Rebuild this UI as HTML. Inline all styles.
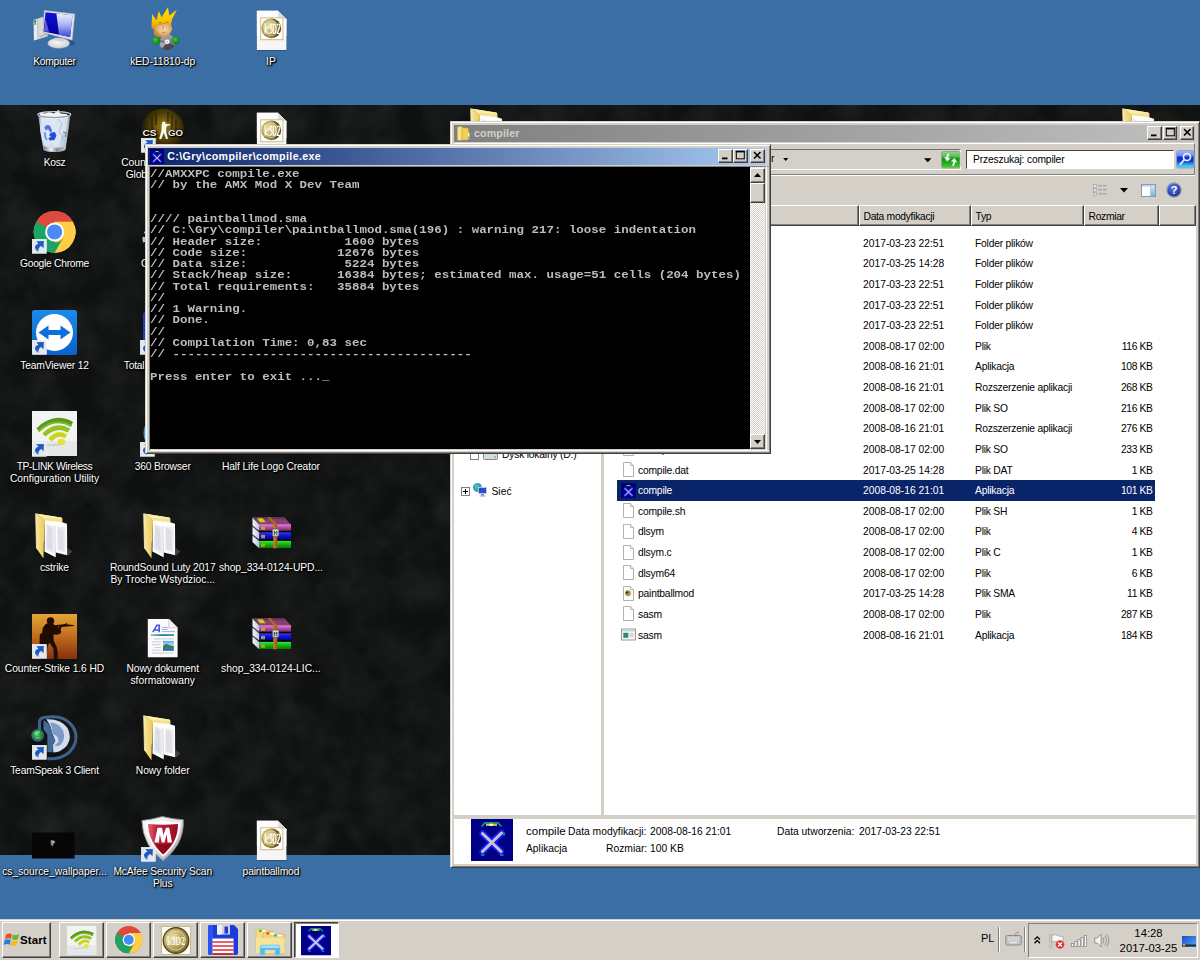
<!DOCTYPE html>
<html><head><meta charset="utf-8">
<style>
*{margin:0;padding:0;box-sizing:border-box}
html,body{width:1200px;height:960px;overflow:hidden}
body{background:#3a6ea5;font-family:"Liberation Sans",sans-serif;font-size:10.3px;color:#000;position:relative}
.a{position:absolute}
svg{display:block;overflow:visible}
#wall{position:absolute;left:0;top:105px;width:1200px;height:750px;background:#0f1110}
/* desktop icons */
.di{position:absolute;width:130px;text-align:center;color:#fff;font-size:10.3px;line-height:12.2px;text-shadow:1px 1px 1px #000,1px 1px 2px #000,0 0 2px #000;white-space:nowrap}
.di span{position:absolute;left:0;width:130px;top:49.500px}.di b{font-weight:normal}
/* classic 3d */
.win{position:absolute;background:#d4d0c8;border:1px solid;border-color:#d4d0c8 #404040 #404040 #d4d0c8;box-shadow:inset 1px 1px 0 #fff,inset -1px -1px 0 #808080}
.btn{position:absolute;background:#d4d0c8;border:1px solid;border-color:#fff #404040 #404040 #fff;box-shadow:inset -1px -1px 0 #808080}
.sunk{position:absolute;border:1px solid;border-color:#808080 #fff #fff #808080;box-shadow:inset 1px 1px 0 #404040}
.cb{position:absolute;top:1.5px;width:14.5px;height:13.5px;background:#d4d0c8;border:1px solid;border-color:#fff #404040 #404040 #fff;box-shadow:inset -1px -1px 0 #808080}
.cb svg{position:absolute;left:0;top:0;width:12.5px;height:11px}
/* explorer */
#ex{left:450px;top:121px;width:750px;height:747px}
#extb{position:absolute;left:4px;top:4px;width:741px;height:17px;background:linear-gradient(90deg,#808080,#c0c0c0);color:#d4d0c8;font-weight:bold;font-size:10.6px;line-height:17px;padding-left:20px;letter-spacing:.17px}
.hd{position:absolute;top:0;height:21px;background:#d4d0c8;border:1px solid;border-color:#fff #404040 #404040 #fff;box-shadow:inset -1px -1px 0 #808080;padding-left:3.5px;line-height:21px;font-size:10.3px;letter-spacing:-.3px}
.row{position:absolute;left:167px;width:538px;height:20.6px;line-height:22.6px;font-size:10.3px;white-space:nowrap}
.row i{position:absolute;font-style:normal;top:0}
.row .n{left:21px;letter-spacing:-.2px}.row .d{left:246px}.row .t{left:358px;letter-spacing:-.22px}.row .s{right:2.600px;text-align:right;letter-spacing:-.4px}
.row svg{position:absolute;left:4px;top:2.5px;width:15px;height:15px}
.sel{background:#0a246a;color:#fff}
/* console */
#cw{left:145px;top:144px;width:625.500px;height:310px}
#cwtb{position:absolute;left:2px;top:3px;width:618px;height:17px;letter-spacing:.4px;background:linear-gradient(90deg,#0a246a,#a6caf0);color:#fff;font-weight:bold;font-size:10.6px;line-height:17px;padding-left:19.300px}
#con{position:absolute;left:4px;top:22px;width:600px;height:282px;background:#000;overflow:hidden}
#con pre{font-family:"Liberation Mono",monospace;font-size:10px;line-height:11.25px;color:#bcbcbc;transform:scaleX(1.2465);transform-origin:0 0;position:absolute;left:0;top:2px;font-weight:bold}
/* taskbar */
#tb{position:absolute;left:0;top:919px;width:1200px;height:41px;background:#d4d0c8;border-top:1px solid #d4d0c8;box-shadow:inset 0 1px 0 #fff}
.tbb{position:absolute;top:4px;height:35px;width:43px}
</style></head><body>
<div id="wall"><svg width="1200" height="750" style="position:absolute;left:0;top:0;overflow:hidden"><filter id="nz" x="0" y="0" width="100%" height="100%"><feTurbulence type="fractalNoise" baseFrequency=".03" numOctaves="4" seed="7"/><feColorMatrix type="matrix" values="0 0 0 0 .85  0 0 0 0 .9  0 0 0 0 .85  .07 .07 .07 0 -.082"/></filter><rect width="1200" height="750" filter="url(#nz)"/></svg></div>
<svg width="0" height="0" style="position:absolute"><defs>
<linearGradient id="gFold" x1="0" y1="0" x2="1" y2="0"><stop offset="0" stop-color="#f7e9a0"/><stop offset="1" stop-color="#e9c95a"/></linearGradient>
<linearGradient id="gPaper" x1="0" y1="0" x2="1" y2="1"><stop offset="0" stop-color="#ffffff"/><stop offset="1" stop-color="#d8d8dc"/></linearGradient>
<radialGradient id="gMedal" cx=".38" cy=".4" r=".7"><stop offset="0" stop-color="#f0e8c0"/><stop offset=".5" stop-color="#bca85c"/><stop offset="1" stop-color="#6e5e24"/></radialGradient>
<linearGradient id="gCS" x1="0" y1="0" x2="0" y2="1"><stop offset="0" stop-color="#e4a634"/><stop offset=".5" stop-color="#c06c20"/><stop offset="1" stop-color="#86300e"/></linearGradient>
<linearGradient id="gTV" x1="0" y1="0" x2="0" y2="1"><stop offset="0" stop-color="#1a8ae8"/><stop offset="1" stop-color="#0a62d0"/></linearGradient>
<linearGradient id="gBin" x1="0" y1="0" x2="1" y2="0"><stop offset="0" stop-color="#dfe6ee"/><stop offset=".5" stop-color="#b8c8dc"/><stop offset="1" stop-color="#e8eef4"/></linearGradient>
<linearGradient id="gScr" x1="0" y1="0" x2="1" y2="0"><stop offset="0" stop-color="#1010d0"/><stop offset=".42" stop-color="#0808c8"/><stop offset=".5" stop-color="#b8c4ff"/><stop offset="1" stop-color="#e8ecff"/></linearGradient>
<linearGradient id="gSh" x1="0" y1="0" x2="0" y2="1"><stop offset="0" stop-color="#d04050"/><stop offset="1" stop-color="#7a1020"/></linearGradient>
<linearGradient id="gMet" x1="0" y1="0" x2="1" y2="1"><stop offset="0" stop-color="#ffffff"/><stop offset="1" stop-color="#9a9aa0"/></linearGradient>
<!-- shortcut overlay 14x14 -->
<symbol id="sc" viewBox="0 0 15 15"><rect x=".4" y=".4" width="14.200" height="14.200" fill="#e4e8ee" stroke="#f4f4f4" stroke-width=".8"/><path d="M4.300 2.400L12 2.100 11.700 9.500 9.300 7.100Q6.500 8.500 6.300 12.700 3.200 11.500 3 8.500 3.200 5.500 6.600 4.700z" fill="#1c5cc0"/><path d="M5 9.500q.3 2 1.300 3.200" stroke="#4a8ae0" stroke-width=".8" fill="none"/></symbol>
<!-- open folder with paper 45x45 -->
<symbol id="fold" viewBox="0 0 45 45"><path d="M3.700 .5L29 4.400q1.200.3 1.300 1.500L30.500 10 13 8z" fill="#f6e08a"/><path d="M3.700 .5L29 4.400q1.200.3 1.300 1.500L13 5z" fill="#fbeeb0"/><path d="M13 7.200L30 9.300 35 10.700 35.200 42.200 23.800 39.600 23.500 44.200 12.400 38.400z" fill="#fdfdfe"/><path d="M14.500 10.500L22 14.500 22.500 41 13.800 36.500z" fill="#e9e9f1"/><path d="M15.500 13l3 1.600 1.500 2.500.4 20.500-5.200-2.700z" fill="#dcdce6"/><path d="M22.900 12.700L23.500 44.200" stroke="#c8c8d0" stroke-width=".7"/><path d="M25 13.500L33.500 14 33.700 39.500 25.300 37.500z" fill="#ececf0"/><path d="M26 15.500l3.500.2 2 2.300.2 19.500-5.500-1.300z" fill="#dedee4"/><path d="M3.700 .5L13 7.500 12.400 27.900 11.800 29 11.500 45.400 4.500 35.500z" fill="url(#gFold)"/><path d="M3.700 .5L4.500 35.500" stroke="#fff4c0" stroke-width=".8"/><path d="M35.500 35l5 3.500-5 4.500z" fill="#777" opacity=".45"/></symbol>
<!-- k3d2 document 45x45 : paper 8.7..38.7 x 4.75..43.75 -->
<symbol id="kdoc" viewBox="0 0 45 45"><path d="M9.400 43.900h29.500v1H10z" fill="#123" opacity=".35"/><path d="M8.900 4.800h21l8.500 8.500V43.900H8.900z" fill="#f6f6f6"/><path d="M8.900 4.800h21l8.500 8.500V30H8.900z" fill="#fdfdfd"/><path d="M29.900 4.800v8.500h8.500z" fill="#dcdcdc"/><path d="M29.900 4.800v8.500h8.500" fill="none" stroke="#f8f8f8" stroke-width=".8"/><rect x="12.700" y="11.800" width="22.200" height="21.900" fill="#fefefe" stroke="#cdbb84" stroke-width="1"/><circle cx="23.200" cy="22.300" r="9.900" fill="url(#gMedal)"/><path d="M23.200 12.400a9.900 9.900 0 0 1 0 19.800q6-3 6.500-10t-6.500-9.800z" fill="#4a3c10" opacity=".7"/><circle cx="23.200" cy="22.300" r="7.300" fill="none" stroke="#f4ecc8" stroke-width=".7" opacity=".7"/><g fill="none" stroke="#fffdf2" stroke-width="1.150" stroke-linejoin="round"><path d="M17.200 17v10.500M20.300 20.800l-3 3.500 3.200 3.200"/><path d="M21.300 18h2.700l-1.700 3.500q2.100.3 1.800 3.200t-3 2.600"/><path d="M25.300 18v9.300h.6q2.100 0 2.100-4.650T25.900 18z"/><path d="M29 19.600q.3-1.700 1.600-1.600 1.500.2 1.200 2.300T29 27.300h3.300"/></g></symbol>
<!-- winrar 45x45 : 4.5..43 x 3.5..35.5 -->
<symbol id="rar" viewBox="0 0 45 45"><linearGradient id="rP" x1="0" y1="0" x2="0" y2="1"><stop offset="0" stop-color="#ff98f4"/><stop offset=".25" stop-color="#d060c0"/><stop offset="1" stop-color="#7a2c68"/></linearGradient><linearGradient id="rB" x1="0" y1="0" x2="0" y2="1"><stop offset="0" stop-color="#4040ff"/><stop offset=".3" stop-color="#1818e8"/><stop offset="1" stop-color="#000088"/></linearGradient><linearGradient id="rG" x1="0" y1="0" x2="0" y2="1"><stop offset="0" stop-color="#38f038"/><stop offset=".3" stop-color="#18c818"/><stop offset="1" stop-color="#0c700c"/></linearGradient><linearGradient id="rW" x1="0" y1="0" x2="1" y2="0"><stop offset="0" stop-color="#f4f4ff"/><stop offset="1" stop-color="#c4c4dc"/></linearGradient><path d="M11.200 11.300h31.800v24H11.200z" fill="#000"/><path d="M4.500 4.300H36.300L42.700 11.300H11.200z" fill="#84426e"/><path d="M4.500 4.300H36.300L38 6.200H6.200z" fill="#6a3058"/><rect x="11.200" y="11.300" width="31.800" height="6.400" fill="url(#rP)"/><rect x="11.200" y="19.400" width="31.800" height="7" fill="url(#rB)"/><rect x="11.200" y="27.900" width="31.800" height="7.300" fill="url(#rG)"/><path d="M4.500 4.600L11.200 11.300V17.700L4.500 12.500z" fill="url(#rW)"/><path d="M4.500 13.500L11.200 19.400V26.400L4.500 21.500z" fill="url(#rW)"/><path d="M4.500 22.500L11.200 27.900V35.200L4.500 29z" fill="url(#rW)"/><path d="M4.500 4.600L11.200 11.300M4.500 13L11.200 19M4.500 22L11.200 27.600" stroke="#555" stroke-width=".7"/><path d="M19.400 4.300h2.900L29.300 11.300h-3.800z" fill="#a86c14"/><rect x="25.500" y="11.300" width="3.800" height="23.900" fill="#a8601a"/><rect x="25.500" y="11.300" width="1.300" height="23.900" fill="#c88428"/><rect x="24.400" y="16" width="6.400" height="7.200" rx="1.300" fill="#d8d8d8" stroke="#555" stroke-width=".7"/><path d="M26.300 18v4M28.800 18v4M26.300 18.500l1.250 1.500 1.250-1.500" stroke="#333" stroke-width=".9" fill="none"/><path d="M9.200 5.200h5.500L17.700 9.200h-5.900z" fill="#d4cc10"/><rect x="13" y="13.600" width="4" height="3.200" fill="#c8a030"/><rect x="13" y="21.800" width="4" height="3.500" fill="#a09858"/><rect x="13" y="30.500" width="4" height="3.200" fill="#98b020"/></symbol>
<!-- chrome -->
<symbol id="chr" viewBox="0 0 48 48"><circle cx="24" cy="24" r="22" fill="#dd4b3e"/><path d="M24 24L4.900 13A22 22 0 0 0 24 46L33.500 29.500z" fill="#1da462" /><path d="M24 24L24 46A22 22 0 0 0 43.100 13H24z" fill="#ffcd46"/><path d="M4.900 13A22 22 0 0 1 43.100 13H24z" fill="#dd4b3e"/><path d="M4.900 13L14.500 29.500 24 24z" fill="#1da462"/><path d="M24 13h19.100A22 22 0 0 1 24 46l9.500-16.500z" fill="#ffcd46"/><path d="M4.900 13A22 22 0 0 1 43.100 13H24A11 11 0 0 0 14.470 18.500z" fill="#dd4b3e"/><path d="M4.900 13L14.470 29.500A11 11 0 0 0 33.530 29.500L24 46A22 22 0 0 1 4.900 13z" fill="#1da462"/><circle cx="24" cy="24" r="10" fill="#fff"/><circle cx="24" cy="24" r="8" fill="#4a8af4"/></symbol>
<!-- tp-link wifi -->
<symbol id="wifi" viewBox="0 0 45 45"><rect width="45" height="45" fill="#f2f4f4"/><rect y="30" width="45" height="15" fill="#e4e8e8"/><g fill="none" stroke-linecap="butt"><path d="M6 19Q22 3 40 13" stroke="#5a9a1a" stroke-width="4.500"/><path d="M6.500 20.500Q22 5.500 39.500 15" stroke="#7ab82a" stroke-width="2"/><path d="M12 24Q24 12 37 19.500" stroke="#98c020" stroke-width="4.500"/><path d="M18 29Q26 20 34 25.500" stroke="#c8d818" stroke-width="4.500"/></g><ellipse cx="29.500" cy="31" rx="4" ry="3.200" fill="#e8e040"/><path d="M10 36q8-3 18-2" stroke="#c8cccc" stroke-width="1.500" fill="none"/></symbol>
<!-- X compile icon -->
<symbol id="xi" viewBox="0 0 42 42"><rect width="42" height="42" fill="#000087"/><path d="M11.500 14.500L30 32.500M30.500 14L11.500 32.500" stroke="#1a1aff" stroke-width="6.500" stroke-linecap="round"/><path d="M13.500 36h-3.500M32.500 36h-3.500M33 13.500v3" stroke="#10a0a0" stroke-width="1.600"/><path d="M11.500 14.500L30 32.500M30.500 14L11.500 32.500" stroke="#c6c6cc" stroke-width="3" stroke-linecap="round"/><path d="M10.500 7.500L14 3.800h13l3.500 3.700" stroke="#109888" stroke-width="1.700" fill="none"/><path d="M15 5.800h11" stroke="#d8c810" stroke-width="2.200"/><path d="M18.500 5.800h3.500" stroke="#fff" stroke-width="2.200"/></symbol>
</defs></svg>
<!-- DESKTOP ICONS -->
<div class="di" style="left:424.3px;top:107.50px"><div class="a" style="left:42.500px;top:0;width:45px;height:45px"><svg viewBox="0 0 45 45" style="width:45px;height:45px"><use href="#fold" width="45" height="45"/></svg></div><span></span></div>
<div class="di" style="left:1076.2px;top:107.50px"><div class="a" style="left:42.500px;top:0;width:45px;height:45px"><svg viewBox="0 0 45 45" style="width:45px;height:45px"><use href="#fold" width="45" height="45"/></svg></div><span></span></div>
<div class="di" style="left:-10.5px;top:6.25px"><div class="a" style="left:42.500px;top:0;width:45px;height:45px"><svg viewBox="0 0 45 45" style="width:45px;height:45px"><defs><linearGradient id="kR" x1="0" y1="0" x2="0" y2="1"><stop offset="0" stop-color="#eef0ff"/><stop offset=".45" stop-color="#b0b8f8"/><stop offset="1" stop-color="#3848d8"/></linearGradient><linearGradient id="kL" x1="0" y1="0" x2="0" y2="1"><stop offset="0" stop-color="#1010d8"/><stop offset="1" stop-color="#000098"/></linearGradient><radialGradient id="kB" cx=".45" cy=".4" r=".6"><stop offset="0" stop-color="#f8f8f8"/><stop offset="1" stop-color="#cfcfd2"/></radialGradient></defs><ellipse cx="38" cy="37" rx="5" ry="2.500" fill="#1a3050" opacity=".4"/><path d="M5.400 12.700L11.200 10.800V26.400L16.500 29.900 5.700 33.600z" fill="#d6d6d8"/><path d="M1.600 13.900L5.400 12.700 5.700 33.600 1.900 34.600z" fill="#ececee"/><path d="M7 30l8-2.600 1.500 1-8.500 2.800z" fill="#b8b8bc"/><rect x="2.200" y="14.300" width="2" height="2.300" fill="#505458"/><rect x="2.200" y="16.800" width="2" height="2" fill="#38d828"/><ellipse cx="26.700" cy="37.200" rx="10.800" ry="5" fill="url(#kB)"/><ellipse cx="26.700" cy="37.200" rx="10.800" ry="5" fill="none" stroke="#c4c4c8" stroke-width=".5"/><path d="M23.500 31.500l8.800 1.800-.6 2.500-8.800-1.200z" fill="#d0d0d4"/><path d="M12.400 4.500L42.700 8 40.100 34 10.700 26.400z" fill="#e2e2e0"/><path d="M12.400 4.500L42.700 8 40.100 34 10.700 26.400z" fill="none" stroke="#c8c8c4" stroke-width=".5"/><path d="M13.600 6.300L40.400 9.200 38.100 31.100 11.500 25.500z" fill="url(#kL)"/><path d="M24.400 7.500L40.400 9.200 38.100 31.100 27 28.700z" fill="url(#kR)"/><path d="M13.600 13L17 25.800 11.500 25.500z" fill="#8080e0" opacity=".7"/></svg></div><span><b style="letter-spacing:-0.275px">Komputer</b></span></div>
<div class="di" style="left:97.7px;top:6.25px"><div class="a" style="left:42.500px;top:0;width:45px;height:45px"><svg viewBox="0 0 45 45" style="width:45px;height:45px"><defs><linearGradient id="kH" x1="0" y1="0" x2="0" y2="1"><stop offset="0" stop-color="#ffe000"/><stop offset=".6" stop-color="#fcc400"/><stop offset="1" stop-color="#e89000"/></linearGradient><radialGradient id="kF" cx=".55" cy=".45" r=".6"><stop offset="0" stop-color="#fcdcae"/><stop offset="1" stop-color="#c8904c"/></radialGradient><radialGradient id="kG" cx=".4" cy=".4" r=".6"><stop offset="0" stop-color="#40c840"/><stop offset="1" stop-color="#108010"/></radialGradient></defs><circle cx="27.300" cy="36.300" r="7.900" fill="#7c7c80"/><path d="M27.300 36.300L20 33.500A7.900 7.900 0 0 1 33 30.800z" fill="#9a9aa0"/><path d="M27.300 36.300L34.500 39.500A7.900 7.900 0 0 1 22 42.200z" fill="#4a4a4e"/><path d="M27.300 36.300L22 42.200A7.900 7.900 0 0 1 19.500 37z" fill="#a8a8ac"/><circle cx="27.300" cy="35.800" r="2.400" fill="#f8f8f8"/><circle cx="27.300" cy="35.800" r=".9" fill="#b0b0b0"/><path d="M13 19.400L30.800 17.100 32.200 23.500 29.300 28.700 26 31 17 31 14.200 28.700z" fill="url(#kF)"/><path d="M13 19.400l2 10 3 1.600h4l-5-5z" fill="#b87838" opacity=".5"/><path d="M11.500 21.700L12.100 8 16.500 14.200 18.800 5.100 21.700 11.200 27.900 1.300 29.300 9.500 36.900 3.700 32.200 13 30.800 18.800 24 17.500 17 19.500 13 23z" fill="url(#kH)"/><path d="M19 16.600h2.500M26 16.200h2.500" stroke="#a87808" stroke-width="1"/><path d="M23.500 20.500l-.8 3.500M22 26.200q1.500.8 3-.2" stroke="#a06830" stroke-width=".7" fill="none"/><circle cx="16.200" cy="34.600" r="4" fill="url(#kG)"/><circle cx="35.700" cy="34.300" r="3.600" fill="url(#kG)"/></svg></div><span><b style="letter-spacing:-0.050px">kED-11810-dp</b></span></div>
<div class="di" style="left:205.9px;top:6.25px"><div class="a" style="left:42.500px;top:0;width:45px;height:45px"><svg viewBox="0 0 45 45" style="width:45px;height:45px"><use href="#kdoc" width="45" height="45"/></svg></div><span>IP</span></div>
<div class="di" style="left:-10.5px;top:107.50px"><div class="a" style="left:42.500px;top:0;width:45px;height:45px"><svg viewBox="0 0 45 45" style="width:45px;height:45px"><defs><linearGradient id="bB" x1="0" y1="0" x2="1" y2="0"><stop offset="0" stop-color="#5a6a78"/><stop offset=".08" stop-color="#b8c8d8"/><stop offset=".3" stop-color="#d4e0ee"/><stop offset=".7" stop-color="#ccdaea"/><stop offset=".93" stop-color="#a8b8c8"/><stop offset="1" stop-color="#4a5a68"/></linearGradient><linearGradient id="bM" x1="0" y1="0" x2="1" y2="0"><stop offset="0" stop-color="#707880"/><stop offset=".35" stop-color="#f4f4f4"/><stop offset=".6" stop-color="#888e94"/><stop offset="1" stop-color="#c0c4c8"/></linearGradient></defs><path d="M6 7L38.600 7 33.700 40.600Q33.700 43.800 22.300 43.800T11.200 40.600z" fill="url(#bB)"/><path d="M11.500 38Q22 42 33.500 38L33.700 40.600Q33.700 43.800 22.300 43.800T11.200 40.600z" fill="url(#bM)"/><path d="M9 9l6 2 6-2.500 7 3 8-3-2 14-5 6 1 8-6 3-4-5-6 4-4-6-2-10z" fill="#e0eaf6" opacity=".75"/><path d="M26 11l4 5-3 8 4 4-3 9" stroke="#a8b8cc" stroke-width=".8" fill="none"/><path d="M31 24l3.500 1-1 4" stroke="#707c88" stroke-width="1" fill="none"/><path d="M8 4.500l5 1 4-1.500 5 1.500 4.400-3.700 2 3.700 6 .5 3 2.500-8 2.500h-14l-8-2.500z" fill="#eef4fa"/><ellipse cx="22.300" cy="6.600" rx="16.400" ry="3" fill="none" stroke="#c8ccd0" stroke-width="1.300"/><path d="M6 7.500Q22 11.500 38.500 7.500" stroke="#8a9098" stroke-width=".9" fill="none"/><g transform="translate(11.800 0) scale(.78 1) translate(-11.800 0)"><path d="M12.500 19.500q3-4 7.500-1.500l2.500 4.500-2.500 2.500-2-3.500q-2-1-3.500 1.500z" fill="#4a7ae0"/><path d="M18.500 27l3-2.500 4.500-.5 2 3.500-2.500 4.500-6 .5-2-2.500 3.500-1z" fill="#2450d8"/><path d="M11.800 24l2.500.5 1 5 1.500 2.500-2 .5q-3-3-3-8.500z" fill="#6a96e8"/></g></svg></div><span><b style="letter-spacing:-0.350px">Kosz</b></span></div>
<div class="di" style="left:97.7px;top:107.50px"><div class="a" style="left:42.500px;top:0;width:45px;height:45px"><svg viewBox="0 0 45 45" style="width:45px;height:45px"><defs><radialGradient id="gGo" cx=".54" cy=".42" r=".56"><stop offset="0" stop-color="#a08418"/><stop offset=".45" stop-color="#5e4c0a"/><stop offset=".85" stop-color="#2a2206"/><stop offset="1" stop-color="#17150c"/></radialGradient></defs><circle cx="22.500" cy="22" r="21.500" fill="url(#gGo)"/><path d="M12 8v14M16 5v12M28 4v10M32 7v14M36 12v10" stroke="#2a2004" stroke-width="1.500" opacity=".8"/><path d="M22.500 14q1.400-1.300 2.700.2l.3 1.800 4.800.3v1l-3.300.5-1 2.300.3 4.400 1.700 6.200-2 .3-2.200-6.300-2.600 6.500-2-.5 2.300-8.200.2-5.500z" fill="#fbfbf6"/><text x="2.500" y="27.500" font-family="Liberation Sans" font-weight="bold" font-size="9.500" fill="#f0f0f0" textLength="14" lengthAdjust="spacingAndGlyphs">CS</text><text x="28" y="27.500" font-family="Liberation Sans" font-weight="bold" font-size="9.500" fill="#e8e8e8" textLength="15" lengthAdjust="spacingAndGlyphs">GO</text></svg><svg class="a" style="left:1px;top:30.500px;width:14.800px;height:14.800px"><use href="#sc"/></svg></div><span><b style="position:relative;left:-8.300px">Counter-Strike</b><br><b style="letter-spacing:-0.119px">Global Offensive</b></span></div>
<div class="di" style="left:205.9px;top:107.50px"><div class="a" style="left:42.500px;top:0;width:45px;height:45px"><svg viewBox="0 0 45 45" style="width:45px;height:45px"><use href="#kdoc" width="45" height="45"/></svg></div><span>sma</span></div>
<div class="di" style="left:-10.5px;top:208.75px"><div class="a" style="left:42.500px;top:0;width:45px;height:45px"><svg viewBox="0 0 45 45" style="width:45px;height:45px"><use href="#chr" x="-.1" y=".25" width="45.400" height="45.400"/></svg><svg class="a" style="left:0;top:30.300px;width:14.800px;height:14.800px"><use href="#sc"/></svg></div><span><b style="letter-spacing:-0.285px">Google Chrome</b></span></div>
<div class="di" style="left:97.7px;top:208.75px"><div class="a" style="left:42.500px;top:0;width:45px;height:45px"><svg viewBox="0 0 45 45" style="width:45px;height:45px"><circle cx="16" cy="30" r="10.500" fill="none" stroke="#a8c4e8" stroke-width="6" stroke-dasharray="4.500 3"/><circle cx="16" cy="30" r="9" fill="#c4d8f0"/></svg></div><span>CCleaner</span></div>
<div class="di" style="left:-10.5px;top:310.00px"><div class="a" style="left:42.500px;top:0;width:45px;height:45px"><svg viewBox="0 0 45 45" style="width:45px;height:45px"><rect width="45" height="45" rx="2.500" fill="url(#gTV)"/><circle cx="22.500" cy="22.500" r="18.500" fill="#fff"/><path d="M6.500 22.500l10-7v4.500h12v-4.500l10 7-10 7v-4.500h-12v4.500z" fill="#0e6edc"/></svg><svg class="a" style="left:0;top:30.300px;width:14.800px;height:14.800px"><use href="#sc"/></svg></div><span><b style="letter-spacing:-0.162px">TeamViewer 12</b></span></div>
<div class="di" style="left:97.7px;top:310.00px"><div class="a" style="left:42.500px;top:0;width:45px;height:45px"><svg viewBox="0 0 45 45" style="width:45px;height:45px"><rect x="3" y="2" width="40" height="41" rx="3" fill="#1a3ad0"/><rect x="8" y="22" width="30" height="21" fill="#fff"/><rect x="14" y="2" width="18" height="12" fill="#d8d8e0"/></svg><svg class="a" style="left:0;top:30.300px;width:14.800px;height:14.800px"><use href="#sc"/></svg></div><span><b style="letter-spacing:-0.220px">Total Commander</b></span></div>
<div class="di" style="left:-10.5px;top:411.25px"><div class="a" style="left:42.500px;top:0;width:45px;height:45px"><svg viewBox="0 0 45 45" style="width:45px;height:45px"><use href="#wifi" width="45" height="45"/></svg><svg class="a" style="left:0;top:30.300px;width:14.800px;height:14.800px"><use href="#sc"/></svg></div><span><b style="letter-spacing:-0.388px">TP-LINK Wireless</b><br><b style="letter-spacing:-0.005px">Configuration Utility</b></span></div>
<div class="di" style="left:97.7px;top:411.25px"><div class="a" style="left:42.500px;top:0;width:45px;height:45px"><svg viewBox="0 0 45 45" style="width:45px;height:45px"><circle cx="22.500" cy="22" r="19" fill="#28a0e8"/><path d="M5 25q8 10 17 4l6 8q-14 8-23-6z" fill="#58c828"/><circle cx="22.500" cy="21" r="9" fill="#fff"/></svg><svg class="a" style="left:0;top:30.300px;width:14.800px;height:14.800px"><use href="#sc"/></svg></div><span><b style="letter-spacing:-0.164px">360 Browser</b></span></div>
<div class="di" style="left:205.9px;top:411.25px"><div class="a" style="left:42.500px;top:0;width:45px;height:45px"><svg viewBox="0 0 45 45" style="width:45px;height:45px"><circle cx="22.500" cy="22.500" r="20" fill="#2a2a2a"/><circle cx="22.500" cy="22.500" r="16" fill="none" stroke="#f0a020" stroke-width="4"/><path d="M17 12h5l8 21h-5l-4-11-4 11h-4l5-14z" fill="#f0a020"/></svg></div><span><b style="letter-spacing:-0.127px">Half Life Logo Creator</b></span></div>
<div class="di" style="left:-10.5px;top:512.50px"><div class="a" style="left:42.500px;top:0;width:45px;height:45px"><svg viewBox="0 0 45 45" style="width:45px;height:45px"><use href="#fold" width="45" height="45"/></svg></div><span><b style="letter-spacing:-0.114px">cstrike</b></span></div>
<div class="di" style="left:97.7px;top:512.50px"><div class="a" style="left:42.500px;top:0;width:45px;height:45px"><svg viewBox="0 0 45 45" style="width:45px;height:45px"><use href="#fold" width="45" height="45"/></svg></div><span><b style="letter-spacing:-0.130px">RoundSound Luty 2017</b><br><b style="letter-spacing:-0.005px">By Troche Wstydzioc...</b></span></div>
<div class="di" style="left:205.9px;top:512.50px"><div class="a" style="left:42.500px;top:0;width:45px;height:45px"><svg viewBox="0 0 45 45" style="width:45px;height:45px"><use href="#rar" width="45" height="45"/></svg></div><span><b style="letter-spacing:-0.077px">shop_334-0124-UPD...</b></span></div>
<div class="di" style="left:-10.5px;top:613.75px"><div class="a" style="left:42.500px;top:0;width:45px;height:45px"><svg viewBox="0 0 45 45" style="width:45px;height:45px"><rect width="45" height="45" fill="url(#gCS)"/><g fill="#200c02"><circle cx="18.500" cy="7" r="3.700"/><path d="M15 9.500l6.500.5 1 1.200 9.500-.9 3-1.300.4 1.600 6.200.3v1.100l-6.500.4-5.500.6-1 2.800.6 1.800-.6 2-3.600 1.200-3.500-.4.200 6.300 2.800 5.700 1.300 6.600-.3 6h-3.600l-.5-10.500-4-6-1.600 3.500-2 13H7.500l2-14-2-.5.300-10.500 2.200-.8.800-5.200 2.200-3.200z"/></g><path d="M26.200 13.500l1-1.500" stroke="#c87820" stroke-width=".8"/></svg><svg class="a" style="left:0;top:30.300px;width:14.800px;height:14.800px"><use href="#sc"/></svg></div><span><b style="letter-spacing:-0.095px">Counter-Strike 1.6 HD</b></span></div>
<div class="di" style="left:97.7px;top:613.75px"><div class="a" style="left:42.500px;top:0;width:45px;height:45px"><svg viewBox="0 0 45 45" style="width:45px;height:45px"><defs><linearGradient id="rT" x1="0" y1="0" x2="1" y2="0"><stop offset="0" stop-color="#8cc8c0"/><stop offset=".5" stop-color="#188484"/><stop offset="1" stop-color="#3a9a94"/></linearGradient><linearGradient id="rS" x1="0" y1="0" x2="0" y2="1"><stop offset="0" stop-color="#58a8f0"/><stop offset=".45" stop-color="#b8dcf4"/><stop offset=".55" stop-color="#4a8a5a"/><stop offset=".75" stop-color="#3a7aa8"/><stop offset="1" stop-color="#2a60b0"/></linearGradient></defs><path d="M7.800 5H28.800L37.600 13.800V43.200H7.800z" fill="#fbfbfd"/><path d="M28.800 5v8.800h8.800z" fill="#f4f4f6" stroke="#c4c4c8" stroke-width=".8"/><path d="M12.800 18.200L17 11.200h2.200V18.200M14.300 16h4.500" stroke="#4848e8" stroke-width="1.500" fill="none"/><path d="M21.800 13.500h5.900M21.800 15.500h5.900M21.800 17.600H35" stroke="#aaa4fa" stroke-width="1"/><rect x="10.800" y="20.200" width="23.200" height="1.800" fill="url(#rT)"/><path d="M14 24.900h19.800M11.900 27.800h8.800M11.900 30.700h8.800M14.800 33.600h5.900M11.900 36.200h8.800" stroke="#c8c8d4" stroke-width="1"/><path d="M11.900 39.100h21.900" stroke="#dcdce4" stroke-width="1.600"/><rect x="23" y="26.900" width="10.800" height="9.900" fill="url(#rS)"/><path d="M23 32q3-3.500 6-1l4.800 1.200v1.500H23z" fill="#3e7e50"/></svg></div><span><b style="letter-spacing:-0.100px">Nowy dokument</b><br><b style="letter-spacing:0.033px">sformatowany</b></span></div>
<div class="di" style="left:205.9px;top:613.75px"><div class="a" style="left:42.500px;top:0;width:45px;height:45px"><svg viewBox="0 0 45 45" style="width:45px;height:45px"><use href="#rar" width="45" height="45"/></svg></div><span><b style="letter-spacing:0.000px">shop_334-0124-LIC...</b></span></div>
<div class="di" style="left:-10.5px;top:715.00px"><div class="a" style="left:42.500px;top:0;width:45px;height:45px"><svg viewBox="0 0 45 45" style="width:45px;height:45px"><defs><radialGradient id="tG" cx=".4" cy=".35" r=".65"><stop offset="0" stop-color="#7ae87a"/><stop offset=".5" stop-color="#28b038"/><stop offset="1" stop-color="#0c7818"/></radialGradient></defs><path d="M7.500 16V6.500Q8 2.500 14 2.200L20 1.800Q33 1.500 40 10.500 45.500 18 43.500 27 40 38.500 28 42.500 21 44.500 15.500 43.500" fill="none" stroke="#3e628e" stroke-width="3"/><circle cx="5.700" cy="20.200" r="6.300" fill="#3e628e"/><path d="M14.200 4.300Q29 3.500 35.500 13 40.500 22 35 30.500 29.500 37 21.300 37.600L21 29.500 23.500 26 20.500 19.200 18 10z" fill="#d2deee"/><path d="M18.500 7.500Q27 8 31 15.500 34 23 29 29.500 26 32 22.500 30.500L24.500 26 21.500 19.500z" fill="#7c9cc8"/><path d="M22 19.500q5 2 4.500 7.500l-3.500 3z" fill="#d2deee"/><path d="M11.500 5L17.600 9.200 20.500 17.300 20 19.800 23.700 25.700 21.200 28.300 20.600 37.200H15.400V19.500L11.500 14.500z" fill="#456a9a"/><circle cx="5.700" cy="20.200" r="4.800" fill="url(#tG)"/><path d="M3 18.600q2-2.400 5-1.800M3.500 22.500q2.500 1.800 5.300-.3" stroke="#c8f4c8" stroke-width=".8" fill="none" opacity=".8"/></svg><svg class="a" style="left:0;top:30.300px;width:14.800px;height:14.800px"><use href="#sc"/></svg></div><span><b style="letter-spacing:-0.194px">TeamSpeak 3 Client</b></span></div>
<div class="di" style="left:97.7px;top:715.00px"><div class="a" style="left:42.500px;top:0;width:45px;height:45px"><svg viewBox="0 0 45 45" style="width:45px;height:45px"><use href="#fold" width="45" height="45"/></svg></div><span><b style="letter-spacing:-0.055px">Nowy folder</b></span></div>
<div class="di" style="left:-10.5px;top:816.25px"><div class="a" style="left:42.500px;top:0;width:45px;height:45px"><svg viewBox="0 0 45 45" style="width:45px;height:45px"><rect x="0" y="16.500" width="42.500" height="26" fill="#060606"/><path d="M19 24l3 .5 1.500 2-2 1-.5 3-2-1.500-.5-3z" fill="#8a8a8a"/><path d="M20 25l2 .5-.5 2z" fill="#d0d0d0"/></svg></div><span><b style="letter-spacing:0.000px">cs_source_wallpaper...</b></span></div>
<div class="di" style="left:97.7px;top:816.25px"><div class="a" style="left:42.500px;top:0;width:45px;height:45px"><svg viewBox="0 0 45 45" style="width:45px;height:45px"><defs><linearGradient id="mS" x1="0" y1="0" x2="1" y2="1"><stop offset="0" stop-color="#fafafa"/><stop offset=".5" stop-color="#e4e4e6"/><stop offset="1" stop-color="#8a8a90"/></linearGradient><linearGradient id="mR" x1="0" y1="0" x2="1" y2="0"><stop offset="0" stop-color="#e06878"/><stop offset=".25" stop-color="#c02840"/><stop offset="1" stop-color="#9a0c20"/></linearGradient></defs><path d="M1.900 4.500Q12 3.500 22.300 .5 32 3 43.300 3.700 44 17 38 28 33 37 23.200 44.800 13.500 37.500 8 28 2 17 1.900 4.500z" fill="url(#mS)" stroke="#85858a" stroke-width=".9"/><path d="M5 7Q14 6.500 22.500 4 31 6 40.500 6.500 40.500 17 35.500 26.500 31 34.500 23.200 41 15.500 34.500 11 26.500 5.500 17 5 7z" fill="#fdfdfd"/><path d="M8 8Q23 9.500 38 8 38 17.500 34 25.500 30 33 23.200 38.400 16.500 33 12.500 25.500 8 17 8 8z" fill="url(#mR)"/><path d="M15 27.500Q23.200 29 31.500 27.500 28 33.500 23.200 38.400 18.500 33.500 15 27.500z" fill="#7c0414" opacity=".7"/><path d="M14.400 26.400L17.600 11.800H22L23.400 19 26 11.800H29.200L32 26.400H27.600L26.600 18.500 24.500 26.400H21.800L19.800 18.500 18.800 26.400z" fill="#fff"/></svg><svg class="a" style="left:1px;top:30.500px;width:14.800px;height:14.800px"><use href="#sc"/></svg></div><span><b style="letter-spacing:-0.135px">McAfee Security Scan</b><br><b style="letter-spacing:-0.125px">Plus</b></span></div>
<div class="di" style="left:205.9px;top:816.25px"><div class="a" style="left:42.500px;top:0;width:45px;height:45px"><svg viewBox="0 0 45 45" style="width:45px;height:45px"><use href="#kdoc" width="45" height="45"/></svg></div><span><b style="letter-spacing:-0.142px">paintballmod</b></span></div>
<!-- EXPLORER -->
<div class="win" id="ex"><div class="a" style="left:-1px;top:-1px;width:750px;height:747px">
<div id="extb">compiler</div>
<svg class="a" style="left:6px;top:5px;width:15px;height:15px" viewBox="0 0 15 15"><path d="M1.5 1.5q0-.7.7-.7h3.3q.6 0 .6.6v12l-1 .9h-2.9q-.7 0-.7-.7z" fill="#f6e58a" stroke="#d9b945" stroke-width=".6"/><path d="M6 2h5.5q.8 0 .8.8v3l1.2.6v6l-1.2.4v.5q0 .7-.7.7h-5.600z" fill="#efd15c" stroke="#c9a53a" stroke-width=".6"/><rect x="11.9" y="7.5" width="1.2" height="4.3" fill="#fff"/><rect x="11.9" y="10.6" width="1.2" height="1.4" fill="#3aa8c8"/></svg>
<div class="a" style="left:697px;top:3.500px;width:50px;height:17px"><div class="cb" style="left:0"><svg viewBox="0 0 12.5 11"><rect x="3" y="7.5" width="5.5" height="1.8" fill="#000"/></svg></div><div class="cb" style="left:15.5px"><svg viewBox="0 0 12.5 11"><rect x="2.3" y="1.3" width="8" height="7.5" fill="none" stroke="#000" stroke-width="1"/><rect x="1.8" y="0.8" width="9" height="1.6" fill="#000"/></svg></div><div class="cb" style="left:32.5px"><svg viewBox="0 0 12.5 11"><path d="M3 2L9.500 8.5M9.500 2L3 8.5" stroke="#000" stroke-width="1.600"/></svg></div></div>
<div class="a" style="left:4px;top:22px;width:741px;height:32px;border:1px solid;border-color:#fff #808080 #808080 #fff"></div>
<div class="a" style="left:70px;top:28px;width:441px;height:21px;border:1px solid;border-color:#707070 #fff #fff #707070;font-size:10.3px;line-height:18px;color:#000"><span class="a" style="left:250px;top:0">r</span><svg class="a" style="left:261.500px;top:7.500px;width:5.500px;height:3px" viewBox="0 0 6 3.500"><path d="M0 0h6L3 3.500z" fill="#000"/></svg><svg class="a" style="left:403px;top:7.500px;width:7.500px;height:4.500px" viewBox="0 0 8 4.500"><path d="M0 0h8L4 4.500z" fill="#000"/></svg></div>
<svg class="a" style="left:491px;top:29.500px;width:19.500px;height:17.500px" viewBox="0 0 20 18"><defs><linearGradient id="gg" x1="0" y1="0" x2="0" y2="1"><stop offset="0" stop-color="#8ad88a"/><stop offset=".3" stop-color="#58c058"/><stop offset=".42" stop-color="#12981a"/><stop offset=".75" stop-color="#22b01a"/><stop offset="1" stop-color="#58d830"/></linearGradient></defs><rect x=".5" y=".5" width="19" height="17" rx="1.800" fill="url(#gg)" stroke="#98a098" stroke-width="1"/><path d="M8.500 2.500L6.500 2.800 5.200 6.500 3.200 6.200 6.200 10.800 9.800 7.500 7.500 7 8.500 2.500z" fill="#f4f4f4"/><path d="M11.500 15.500L13.500 15.200 14.600 11.500 16.800 11.800 13.800 7.200 10.200 10.500 12.500 11 11.500 15.500z" fill="#ecf4ec"/></svg>
<div class="a" style="left:516px;top:28.500px;width:208px;height:19.500px;background:#fff;border:1px solid;border-color:#404040 #fff #fff #404040;font-size:10.3px;line-height:18px;padding-left:6px;color:#000;letter-spacing:-.18px">Przeszukaj: compiler</div>
<svg class="a" style="left:725.500px;top:29px;width:18.500px;height:18.500px" viewBox="0 0 19 19"><defs><linearGradient id="sb" x1="0" y1="0" x2="0" y2="1"><stop offset="0" stop-color="#a8b8f8"/><stop offset=".32" stop-color="#6a88f0"/><stop offset=".36" stop-color="#0c30d8"/><stop offset=".6" stop-color="#0a38d0"/><stop offset=".85" stop-color="#38c0f0"/><stop offset="1" stop-color="#58dcf8"/></linearGradient></defs><rect x=".5" y=".5" width="18" height="18" rx="2" fill="url(#sb)" stroke="#90a0c8"/><circle cx="11.300" cy="7.200" r="3.600" fill="none" stroke="#f4f4f8" stroke-width="1.700"/><path d="M8.600 10L4.500 14.500" stroke="#e8e8f0" stroke-width="1.900" stroke-linecap="round"/></svg>
<div class="a" style="left:4px;top:54px;width:741px;height:1px;background:#fff"></div>
<svg class="a" style="left:643px;top:63px;width:15px;height:12px" viewBox="0 0 15 12"><g fill="#fff" stroke="#8a94a8" stroke-width=".6"><rect x=".5" y=".3" width="3" height="3"/><rect x=".5" y="4.300" width="3" height="3"/><rect x=".5" y="8.300" width="3" height="3"/></g><rect x="1.500" y="1.300" width="1" height="1" fill="#6a8"/><rect x="1.500" y="5.300" width="1" height="1" fill="#e44"/><rect x="1.500" y="9.300" width="1" height="1" fill="#36c"/><path d="M5.500 1.800h3.500M10 1.800h3.500M5.500 5.800h3.500M10 5.800h3.500M5.500 9.800h3.500M10 9.800h3.500" stroke="#8a8f9a" stroke-width="1"/></svg>
<svg class="a" style="left:670px;top:67px;width:8px;height:4.500px" viewBox="0 0 8 4.500"><path d="M0 0h8L4 4.500z" fill="#000"/></svg>
<svg class="a" style="left:691px;top:63px;width:15px;height:13px" viewBox="0 0 15 13"><defs><linearGradient id="pp" x1="0" y1="0" x2="0" y2="1"><stop offset="0" stop-color="#d8ecf4"/><stop offset="1" stop-color="#7ab8d8"/></linearGradient></defs><rect x=".5" y=".5" width="14" height="12" fill="#fff" stroke="#7a9ab8"/><rect x="1" y="1" width="13" height="1.800" fill="#c8d8e8"/><rect x="9.500" y="1" width="4.500" height="11" fill="url(#pp)" stroke="#9ac" stroke-width=".5"/></svg>
<svg class="a" style="left:716px;top:61px;width:16px;height:16px" viewBox="0 0 16 16"><defs><radialGradient id="hp" cx=".4" cy=".3" r=".8"><stop offset="0" stop-color="#5a7ae0"/><stop offset="1" stop-color="#14288a"/></radialGradient></defs><circle cx="8" cy="8" r="7.200" fill="url(#hp)" stroke="#9aa0b0" stroke-width="1.200"/><text x="8" y="12" font-family="Liberation Sans" font-weight="bold" font-size="11" fill="#fff" text-anchor="middle">?</text></svg>
<div class="a" style="left:4px;top:84px;width:147px;height:610px;background:#fff"></div>
<div class="a" style="left:154px;top:84px;width:592px;height:610px;background:#fff"></div>
<div class="a" style="left:155px;top:84px;width:591px;height:21px">
<div class="hd" style="left:0px;width:254px"></div>
<div class="hd" style="left:254px;width:112px">Data modyfikacji</div>
<div class="hd" style="left:366px;width:113px">Typ</div>
<div class="hd" style="left:479px;width:75px">Rozmiar</div>
<div class="hd" style="left:554px;width:37px"></div>
</div>
<div class="row" style="top:111.70px"><svg viewBox="0 0 15 15"><path d="M1 3h5l1 1.5h7v9h-13z" fill="#f3d86a" stroke="#c9a93a" stroke-width=".8"/></svg><i class="n">addons</i><i class="d">2017-03-23 22:51</i><i class="t">Folder plików</i><i class="s"></i></div>
<div class="row" style="top:132.32px"><svg viewBox="0 0 15 15"><path d="M1 3h5l1 1.5h7v9h-13z" fill="#f3d86a" stroke="#c9a93a" stroke-width=".8"/></svg><i class="n">compiled</i><i class="d">2017-03-25 14:28</i><i class="t">Folder plików</i><i class="s"></i></div>
<div class="row" style="top:152.95px"><svg viewBox="0 0 15 15"><path d="M1 3h5l1 1.5h7v9h-13z" fill="#f3d86a" stroke="#c9a93a" stroke-width=".8"/></svg><i class="n">include</i><i class="d">2017-03-23 22:51</i><i class="t">Folder plików</i><i class="s"></i></div>
<div class="row" style="top:173.57px"><svg viewBox="0 0 15 15"><path d="M1 3h5l1 1.5h7v9h-13z" fill="#f3d86a" stroke="#c9a93a" stroke-width=".8"/></svg><i class="n">scripting</i><i class="d">2017-03-23 22:51</i><i class="t">Folder plików</i><i class="s"></i></div>
<div class="row" style="top:194.20px"><svg viewBox="0 0 15 15"><path d="M1 3h5l1 1.5h7v9h-13z" fill="#f3d86a" stroke="#c9a93a" stroke-width=".8"/></svg><i class="n">testsuite</i><i class="d">2017-03-23 22:51</i><i class="t">Folder plików</i><i class="s"></i></div>
<div class="row" style="top:214.82px"><svg viewBox="0 0 15 15"><path d="M2.5 .5h7l3 3v11h-10z" fill="#fff" stroke="#a8a8a8" stroke-width=".9"/><path d="M9.5 .5v3h3" fill="#f0f0f0" stroke="#a8a8a8" stroke-width=".8"/></svg><i class="n">amxxpc</i><i class="d">2008-08-17 02:00</i><i class="t">Plik</i><i class="s">116 KB</i></div>
<div class="row" style="top:235.45px"><svg viewBox="0 0 15 15"><rect x=".5" y="2" width="14" height="11" fill="#f4f4f4" stroke="#8a8f96" stroke-width=".9"/><rect x="1" y="2.4" width="13" height="2" fill="#c9d3e2"/><rect x="2.3" y="5.8" width="5" height="5" fill="#2d8a6a"/><path d="M8.5 7h4M8.5 9h4" stroke="#9aa" stroke-width=".8"/></svg><i class="n">amxxpc</i><i class="d">2008-08-16 21:01</i><i class="t">Aplikacja</i><i class="s">108 KB</i></div>
<div class="row" style="top:256.07px"><svg viewBox="0 0 15 15"><path d="M2.5 .5h7l3 3v11h-10z" fill="#fff" stroke="#a8a8a8" stroke-width=".9"/><path d="M9.5 .5v3h3" fill="#f0f0f0" stroke="#a8a8a8" stroke-width=".8"/></svg><i class="n">amxxpc32.dll</i><i class="d">2008-08-16 21:01</i><i class="t">Rozszerzenie aplikacji</i><i class="s">268 KB</i></div>
<div class="row" style="top:276.70px"><svg viewBox="0 0 15 15"><path d="M2.5 .5h7l3 3v11h-10z" fill="#fff" stroke="#a8a8a8" stroke-width=".9"/><path d="M9.5 .5v3h3" fill="#f0f0f0" stroke="#a8a8a8" stroke-width=".8"/></svg><i class="n">amxxpc32.so</i><i class="d">2008-08-17 02:00</i><i class="t">Plik SO</i><i class="s">216 KB</i></div>
<div class="row" style="top:297.32px"><svg viewBox="0 0 15 15"><path d="M2.5 .5h7l3 3v11h-10z" fill="#fff" stroke="#a8a8a8" stroke-width=".9"/><path d="M9.5 .5v3h3" fill="#f0f0f0" stroke="#a8a8a8" stroke-width=".8"/></svg><i class="n">amxxpc64.dll</i><i class="d">2008-08-16 21:01</i><i class="t">Rozszerzenie aplikacji</i><i class="s">276 KB</i></div>
<div class="row" style="top:317.95px"><svg viewBox="0 0 15 15"><path d="M2.5 .5h7l3 3v11h-10z" fill="#fff" stroke="#a8a8a8" stroke-width=".9"/><path d="M9.5 .5v3h3" fill="#f0f0f0" stroke="#a8a8a8" stroke-width=".8"/></svg><i class="n">amxxpc64.so</i><i class="d">2008-08-17 02:00</i><i class="t">Plik SO</i><i class="s">233 KB</i></div>
<div class="row" style="top:338.57px"><svg viewBox="0 0 15 15"><path d="M2.5 .5h7l3 3v11h-10z" fill="#fff" stroke="#a8a8a8" stroke-width=".9"/><path d="M9.5 .5v3h3" fill="#f0f0f0" stroke="#a8a8a8" stroke-width=".8"/></svg><i class="n">compile.dat</i><i class="d">2017-03-25 14:28</i><i class="t">Plik DAT</i><i class="s">1 KB</i></div>
<div class="row sel" style="top:359.20px"><svg viewBox="0 0 15 15"><rect width="15" height="15" fill="#000080"/><path d="M4 5.5L11 12.5M11 5.5L4 12.5" stroke="#3a3aff" stroke-width="2.4" stroke-linecap="round"/><path d="M4 5.5L11 12.5M11 5.5L4 12.5" stroke="#c8c8d0" stroke-width="1"/><path d="M5 3.2Q7.5 1.6 10 3.2" stroke="#2a9a8a" stroke-width="1" fill="none"/><path d="M6.5 2.5h2" stroke="#e0d020" stroke-width="1"/></svg><i class="n">compile</i><i class="d">2008-08-16 21:01</i><i class="t">Aplikacja</i><i class="s">101 KB</i></div>
<div class="row" style="top:379.82px"><svg viewBox="0 0 15 15"><path d="M2.5 .5h7l3 3v11h-10z" fill="#fff" stroke="#a8a8a8" stroke-width=".9"/><path d="M9.5 .5v3h3" fill="#f0f0f0" stroke="#a8a8a8" stroke-width=".8"/></svg><i class="n">compile.sh</i><i class="d">2008-08-17 02:00</i><i class="t">Plik SH</i><i class="s">1 KB</i></div>
<div class="row" style="top:400.45px"><svg viewBox="0 0 15 15"><path d="M2.5 .5h7l3 3v11h-10z" fill="#fff" stroke="#a8a8a8" stroke-width=".9"/><path d="M9.5 .5v3h3" fill="#f0f0f0" stroke="#a8a8a8" stroke-width=".8"/></svg><i class="n">dlsym</i><i class="d">2008-08-17 02:00</i><i class="t">Plik</i><i class="s">4 KB</i></div>
<div class="row" style="top:421.07px"><svg viewBox="0 0 15 15"><path d="M2.5 .5h7l3 3v11h-10z" fill="#fff" stroke="#a8a8a8" stroke-width=".9"/><path d="M9.5 .5v3h3" fill="#f0f0f0" stroke="#a8a8a8" stroke-width=".8"/></svg><i class="n">dlsym.c</i><i class="d">2008-08-17 02:00</i><i class="t">Plik C</i><i class="s">1 KB</i></div>
<div class="row" style="top:441.70px"><svg viewBox="0 0 15 15"><path d="M2.5 .5h7l3 3v11h-10z" fill="#fff" stroke="#a8a8a8" stroke-width=".9"/><path d="M9.5 .5v3h3" fill="#f0f0f0" stroke="#a8a8a8" stroke-width=".8"/></svg><i class="n">dlsym64</i><i class="d">2008-08-17 02:00</i><i class="t">Plik</i><i class="s">6 KB</i></div>
<div class="row" style="top:462.32px"><svg viewBox="0 0 15 15"><path d="M2.5 .5h7l3 3v11h-10z" fill="#fdfcf6" stroke="#a8a8a8" stroke-width=".9"/><path d="M9.5 .5v3h3" fill="#f0f0f0" stroke="#a8a8a8" stroke-width=".8"/><circle cx="7" cy="7.2" r="3" fill="#b89a55"/><circle cx="6.2" cy="6.6" r="1.4" fill="#4a3a1a"/></svg><i class="n">paintballmod</i><i class="d">2017-03-25 14:28</i><i class="t">Plik SMA</i><i class="s">11 KB</i></div>
<div class="row" style="top:482.95px"><svg viewBox="0 0 15 15"><path d="M2.5 .5h7l3 3v11h-10z" fill="#fff" stroke="#a8a8a8" stroke-width=".9"/><path d="M9.5 .5v3h3" fill="#f0f0f0" stroke="#a8a8a8" stroke-width=".8"/></svg><i class="n">sasm</i><i class="d">2008-08-17 02:00</i><i class="t">Plik</i><i class="s">287 KB</i></div>
<div class="row" style="top:503.57px"><svg viewBox="0 0 15 15"><rect x=".5" y="2" width="14" height="11" fill="#f4f4f4" stroke="#8a8f96" stroke-width=".9"/><rect x="1" y="2.4" width="13" height="2" fill="#c9d3e2"/><rect x="2.3" y="5.8" width="5" height="5" fill="#2d8a6a"/><path d="M8.5 7h4M8.5 9h4" stroke="#9aa" stroke-width=".8"/></svg><i class="n">sasm</i><i class="d">2008-08-16 21:01</i><i class="t">Aplikacja</i><i class="s">184 KB</i></div>
<div class="a" style="left:20px;top:328px;letter-spacing:-.2px;font-size:10.3px;line-height:14px;white-space:nowrap"><span class="a" style="left:0;top:2px;width:9px;height:9px;border:1px solid #808080;background:#fff"></span><svg class="a" style="left:13px;top:0;width:15px;height:12px" viewBox="0 0 15 12"><rect x=".5" y="4" width="14" height="6.500" rx="1" fill="#d8dce0" stroke="#808890"/><rect x="11" y="7.500" width="2" height="1.200" fill="#3c3"/></svg><span class="a" style="left:32px;top:-1px">Dysk lokalny (D:)</span></div>
<div class="a" style="left:10.500px;top:363.500px;font-size:10.3px;line-height:14px;white-space:nowrap"><svg class="a" style="left:0;top:2px;width:9px;height:9px" viewBox="0 0 9 9"><rect x=".5" y=".5" width="8" height="8" fill="#fff" stroke="#808080"/><path d="M2 4.500h5M4.500 2v5" stroke="#000" stroke-width="1"/></svg><svg class="a" style="left:11px;top:-3px;width:16px;height:16px" viewBox="0 0 16 16"><circle cx="5.500" cy="5.500" r="4.500" fill="#3a9ae0"/><path d="M3 3q2-1.500 3 .5t-1 3-2-1z" fill="#5c5"/><rect x="6.500" y="5.500" width="8" height="6" fill="#2a4ad8" stroke="#c8d0e0" stroke-width=".8"/><rect x="9" y="12" width="3" height="1.500" fill="#889"/><rect x="7.500" y="13.500" width="6" height="1" fill="#99a"/></svg><span class="a" style="left:31px;top:0">Sieć</span></div>
<div class="a" style="left:4px;top:698px;width:742px;height:45px;background:#fff"></div>
<svg class="a" style="left:21px;top:698px;width:42px;height:42px" viewBox="0 0 42 42"><use href="#xi"/></svg>
<div class="a" style="left:76px;top:702.500px;font-size:11.5px;line-height:14px;white-space:nowrap">compile</div>
<div class="a" style="left:76px;top:720.500px;font-size:10.3px;line-height:14px;white-space:nowrap">Aplikacja</div>
<div class="a" style="left:118px;top:703.500px;font-size:10.3px;line-height:14px;white-space:nowrap">Data modyfikacji:</div><div class="a" style="left:200px;top:703.500px;font-size:10.3px;line-height:14px;white-space:nowrap">2008-08-16 21:01</div>
<div class="a" style="left:327px;top:703.500px;font-size:10.3px;line-height:14px;white-space:nowrap">Data utworzenia:</div><div class="a" style="left:409px;top:703.500px;font-size:10.3px;line-height:14px;white-space:nowrap">2017-03-23 22:51</div>
<div class="a" style="left:156px;top:720.500px;font-size:10.3px;line-height:14px;white-space:nowrap">Rozmiar:</div><div class="a" style="left:200px;top:720.500px;font-size:10.3px;line-height:14px;white-space:nowrap">100 KB</div>
</div></div>
<!-- CONSOLE -->
<div class="win" id="cw">
<div id="cwtb">C:\Gry\compiler\compile.exe</div>
<svg class="a" style="left:4px;top:4px;width:14px;height:15px" viewBox="0 0 14 15"><rect width="14" height="15" fill="#000080"/><path d="M3.5 5.5L10.5 12.5M10.5 5.5L3.5 12.5" stroke="#3a3aff" stroke-width="2.4" stroke-linecap="round"/><path d="M3.5 5.5L10.5 12.5M10.5 5.5L3.5 12.5" stroke="#c0c0c0" stroke-width="1"/><path d="M4.5 3.2Q7 1.6 9.5 3.2" stroke="#2a9a8a" stroke-width="1" fill="none"/><path d="M6 2.5h2" stroke="#e0d020" stroke-width="1"/></svg>
<div class="a" style="left:572px;top:2.500px;width:48px;height:17px">
<div class="cb" style="left:0"><svg viewBox="0 0 12.5 11"><rect x="3" y="7.5" width="5.5" height="1.8" fill="#000"/></svg></div>
<div class="cb" style="left:15px"><svg viewBox="0 0 12.5 11"><rect x="2.3" y="1.3" width="8" height="7.5" fill="none" stroke="#000" stroke-width="1"/><rect x="1.8" y="0.8" width="9" height="1.6" fill="#000"/></svg></div>
<div class="cb" style="left:32px"><svg viewBox="0 0 12.5 11"><path d="M3 2L9.5 8.5M9.5 2L3 8.5" stroke="#000" stroke-width="1.6"/></svg></div>
</div>
<div class="a" style="left:3px;top:21px;width:620px;height:284.500px;border:1px solid;border-color:#808080 #d4d0c8 #fff #808080"></div><div class="a" style="left:619.500px;top:21px;width:1.200px;height:284px;background:#fff"></div>
<div id="con"><pre>//AMXXPC compile.exe
// by the AMX Mod X Dev Team


//// paintballmod.sma
// C:\Gry\compiler\paintballmod.sma(196) : warning 217: loose indentation
// Header size:           1600 bytes
// Code size:            12676 bytes
// Data size:             5224 bytes
// Stack/heap size:      16384 bytes; estimated max. usage=51 cells (204 bytes)
// Total requirements:   35884 bytes
//
// 1 Warning.
// Done.
//
// Compilation Time: 0,83 sec
// ----------------------------------------

Press enter to exit ..._</pre></div>
<!-- scrollbar -->
<div class="a" style="left:604px;top:22px;width:14.500px;height:282px;background:repeating-conic-gradient(#fff 0 25%,#d4d0c8 0 50%) 0 0/2px 2px"></div>
<div class="btn" style="left:604px;top:22.500px;width:14.500px;height:15px"><svg class="a" style="left:3px;top:4px;width:7px;height:4px" viewBox="0 0 7 4"><path d="M0 4L3.5 0L7 4Z" fill="#000"/></svg></div>
<div class="btn" style="left:604px;top:37.500px;width:14.500px;height:20.500px"></div>
<div class="btn" style="left:604px;top:289px;width:14.500px;height:15px"><svg class="a" style="left:3px;top:5px;width:7px;height:4px" viewBox="0 0 7 4"><path d="M0 0L3.5 4L7 0Z" fill="#000"/></svg></div>
</div>
<!-- TASKBAR -->
<div id="tb">
<div class="btn" style="left:2px;top:2px;width:49px;height:36px"><svg class="a" style="left:2px;top:8.500px;width:15px;height:14px" viewBox="0 0 15 14"><path d="M1 2.500q3-2 6-.3l-1 4.800q-3-1.600-6 .2z" fill="#e8502a"/><path d="M8 2.500q3 1.500 6-.5l-1 5q-3 2-6 .3z" fill="#6ab82a"/><path d="M-.3 8.200q3-2 6-.2l-1 4.800q-3-1.600-6 .2z" fill="#2a7ae0"/><path d="M6.700 8.500q3 1.600 6-.3l-1 4.800q-3 2-6 .3z" fill="#f8b818"/></svg><span class="a" style="left:17px;top:10.500px;font-size:11.500px;font-weight:bold;line-height:13px;letter-spacing:.1px">Start</span></div>
<div class="btn tbb" style="left:59px;top:2px;width:44.500px;height:36px"><svg class="a" style="left:7px;top:2.500px;width:29.500px;height:29px" viewBox="0 0 45 45" preserveAspectRatio="none"><use href="#wifi"/></svg></div>
<div class="btn tbb" style="left:106px;top:2px;width:44.500px;height:36px"><svg class="a" style="left:7.200px;top:2.200px;width:29.600px;height:29.600px" viewBox="0 0 48 48"><use href="#chr"/></svg></div>
<div class="btn tbb" style="left:153px;top:2px;width:44.500px;height:36px"><svg class="a" style="left:7px;top:2.500px;width:30px;height:29px" viewBox="0 0 30 29"><rect x=".5" y=".5" width="29" height="28" fill="#fdfcf6" stroke="#c8b888"/><circle cx="15" cy="14.500" r="12.800" fill="url(#gMedal)"/><circle cx="15" cy="14.500" r="9.500" fill="none" stroke="#f0e8c8" stroke-width=".9" opacity=".8"/><circle cx="15" cy="14.500" r="12.800" fill="none" stroke="#4a3a1a" stroke-width="1.200"/><text x="15" y="19" font-family="Liberation Serif" font-size="12" font-weight="bold" fill="#fbf8ea" text-anchor="middle" textLength="18" lengthAdjust="spacingAndGlyphs">k3D2</text></svg></div>
<div class="btn tbb" style="left:200px;top:2px;width:44.500px;height:36px"><svg class="a" style="left:7px;top:2px;width:30px;height:30px" viewBox="0 0 30 30"><path d="M2 0h24l4 4v24q0 2-2 2H2q-2 0-2-2V2q0-2 2-2z" fill="#1c3cd8"/><path d="M2 0h3v30H2q-2 0-2-2V2q0-2 2-2z" fill="#2a52f0"/><rect x="9" y="0" width="13" height="9.500" fill="#d0d0d8"/><rect x="9" y="0" width="5" height="9.500" fill="#f0f0f4"/><rect x="16.500" y="1.500" width="3.500" height="7" fill="#1c3cd8"/><rect x="4.500" y="13.500" width="21" height="16.500" fill="#fff"/><path d="M4.500 17h21M4.500 21h21M4.500 25h21" stroke="#e02838" stroke-width="1.300"/><rect x="4.500" y="28" width="21" height="2" fill="#c83040"/></svg></div>
<div class="btn tbb" style="left:247px;top:2px;width:44.500px;height:36px"><svg class="a" style="left:7px;top:4.500px;width:30px;height:28px" viewBox="0 0 30 28"><path d="M1 3q0-2 2-2h7l2 2h6v22H1z" fill="#f4dc84" stroke="#d8b850" stroke-width=".6"/><path d="M8 6q0-2 2-2h7l2 2h9q1.500 0 1.500 1.500V26H8z" fill="#f0d470" stroke="#d0b048" stroke-width=".6"/><rect x="4" y="1.800" width="3" height="2" fill="#28c838"/><rect x="11.500" y="4.500" width="3" height="2" fill="#e83828"/><rect x="19" y="6.500" width="3" height="2" fill="#38a8f0"/><rect x="7" y="2" width="4" height="1.600" fill="#fff"/><rect x="14.500" y="4.800" width="5" height="1.600" fill="#fff"/><rect x="22" y="6.800" width="5" height="1.600" fill="#fff"/><path d="M1 10h28.500v15H1z" fill="#f8e498"/><path d="M5 27V19q0-2 2-2h16q2 0 2 2v8h-5v-5H10v5z" fill="#58b8e8" stroke="#88d0f4" stroke-width=".8"/><path d="M5.500 20q0-2.500 2-2.500h15q2 0 2 2.500z" fill="#a8e0f8"/></svg></div>
<div class="a" style="left:293.500px;top:2px;width:45px;height:36px;background:#fff;border:1px solid;border-color:#404040 #fff #fff #404040;box-shadow:inset 1px 1px 0 #808080"><svg class="a" style="left:6.500px;top:2.500px;width:30px;height:29.500px" viewBox="0 0 42 42" preserveAspectRatio="none"><use href="#xi"/></svg></div>
<!-- lang -->
<span class="a" style="left:981px;top:12px;font-size:11px;line-height:13px">PL</span>
<div class="a" style="left:998px;top:7px;width:2px;height:25px;border-left:1px solid #808080;border-right:1px solid #fff"></div>
<svg class="a" style="left:1005px;top:12px;width:17px;height:14px" viewBox="0 0 17 14"><path d="M10 3q1-2.500 4-3" stroke="#909090" stroke-width="1" fill="none"/><rect x=".8" y="3.500" width="15.400" height="9.500" rx="1.500" fill="#c4c4c4" stroke="#8c8c8c"/><path d="M3 6h11M3 8h11" stroke="#f0f0f0" stroke-width="1" stroke-dasharray="1.500 1"/><path d="M4.500 10.500h8" stroke="#f0f0f0" stroke-width="1.200"/></svg>
<div class="a" style="left:1024px;top:7px;width:2px;height:25px;border-left:1px solid #808080;border-right:1px solid #fff"></div>
<!-- tray -->
<div class="a" style="left:1027.500px;top:2.500px;width:170px;height:35px;border:1px solid;border-color:#808080 #fff #fff #808080"></div>
<svg class="a" style="left:1033.500px;top:15.500px;width:6.500px;height:8px" viewBox="0 0 6.500 8"><path d="M.5 3.500L3.250 .8 6 3.500M.5 7.200L3.250 4.500 6 7.200" stroke="#000" stroke-width="1.300" fill="none"/></svg>
<svg class="a" style="left:1048.500px;top:13.500px;width:16px;height:15px" viewBox="0 0 16 15"><rect x="1" y=".5" width="1.800" height="13.500" rx=".8" fill="#f4f4f4" stroke="#808080" stroke-width=".6"/><path d="M3 1.500q3-1.500 5.500 0t5.500.8v6q-3 1-5.500-.3T3 8z" fill="#f8f8f8" stroke="#909090" stroke-width=".6"/><circle cx="11" cy="10.500" r="4.300" fill="#e02828"/><circle cx="11" cy="10.500" r="4.300" fill="none" stroke="#f8a0a0" stroke-width=".5"/><path d="M9 8.500l4 4M13 8.500l-4 4" stroke="#fff" stroke-width="1.400"/></svg>
<svg class="a" style="left:1071px;top:15px;width:16px;height:12px" viewBox="0 0 16 12"><g fill="#fafafa" stroke="#808080" stroke-width=".7"><rect x=".5" y="8.500" width="2.300" height="3"/><rect x="3.700" y="6.500" width="2.300" height="5"/><rect x="6.900" y="4.500" width="2.300" height="7"/><rect x="10.100" y="2.500" width="2.300" height="9"/><rect x="13.300" y=".5" width="2.300" height="11"/></g></svg>
<svg class="a" style="left:1094px;top:13px;width:15px;height:15px" viewBox="0 0 15 15"><path d="M.8 5h2.500L7 1.200v12.600L3.300 10H.8z" fill="#f4f4f4" stroke="#808080" stroke-width=".8"/><path d="M8.800 4.500q2 3 0 6M10.800 2.800q3.200 4.700 0 9.400M12.800 1.200q4.200 6.300 0 12.600" stroke="#909090" stroke-width=".9" fill="none"/></svg>
<div class="a" style="left:1110px;top:6px;width:77px;text-align:center;font-size:11.300px;line-height:14.500px">14:28<br>2017-03-25</div>
<svg class="a" style="left:1182px;top:16px;width:14px;height:11px" viewBox="0 0 14 11"><defs><linearGradient id="gSd" x1="0" y1="0" x2="1" y2="1"><stop offset="0" stop-color="#1a4ad0"/><stop offset="1" stop-color="#58a8f0"/></linearGradient></defs><rect width="14" height="11" fill="url(#gSd)"/><rect x="0" y="8.500" width="14" height="2" fill="#1a2a4a"/><circle cx="2" cy="9" r="1.300" fill="#e8a020"/></svg>
</div>
</body></html>
